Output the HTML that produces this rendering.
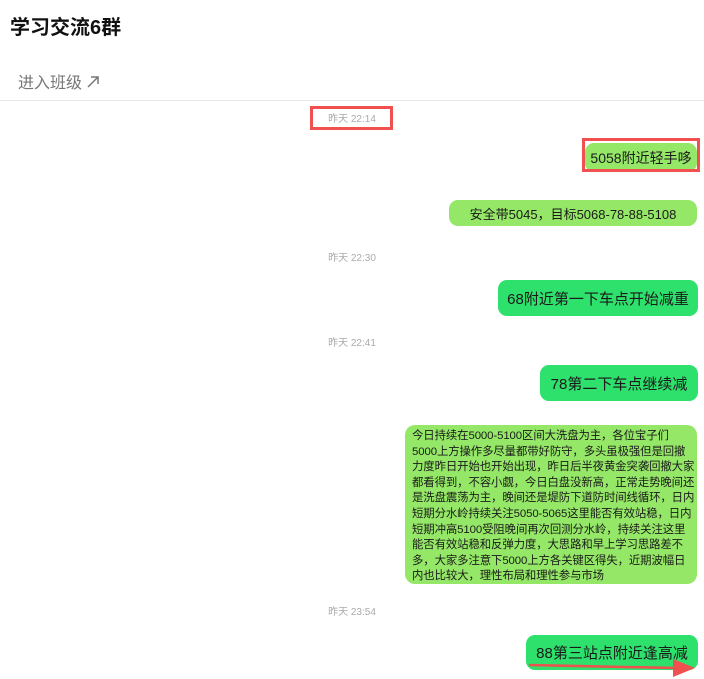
<!DOCTYPE html>
<html><head><meta charset="utf-8"><style>
body{margin:0;width:704px;height:679px;background:#fff;position:relative;overflow:hidden;font-family:"Liberation Sans","Noto Sans CJK SC",sans-serif;color:#222}
.a{position:absolute;white-space:nowrap}
.ts{font-size:10px;color:#aaa;width:100%;text-align:center;left:0}
.b{position:absolute;box-sizing:border-box;border-radius:9px;color:#1a1a1a;display:flex;align-items:center;justify-content:center;white-space:nowrap}
.l{background:#95e867}
.g{background:#2ee06c;font-size:15px}
</style></head><body>
<div class="a" style="left:10px;top:11px;font-size:20px;font-weight:bold;color:#111">学习交流6群</div>
<div class="a" style="left:18px;top:69px;font-size:16px;color:#777">进入班级 <svg width="14" height="14" viewBox="0 0 14 14" style="vertical-align:-1px"><path d="M2 12L12 2M5 2h7v7" fill="none" stroke="#777" stroke-width="1.5"/></svg></div>
<div class="a" style="left:0;top:100px;width:704px;height:1px;background:#e6e6e6"></div>

<div class="a ts" style="top:110px">昨天 22:14</div>
<div class="a" style="left:310px;top:106px;width:77px;height:18px;border:3px solid #f05050"></div>

<div class="b l" style="left:585px;top:143px;width:112px;height:29px;font-size:14px">5058附近轻手哆</div>
<div class="a" style="left:582px;top:138px;width:112px;height:28px;border:3px solid #f05050"></div>

<div class="b l" style="left:449px;top:200px;width:248px;height:26px;font-size:13px">安全带5045，目标5068-78-88-5108</div>

<div class="a ts" style="top:249px">昨天 22:30</div>
<div class="b g" style="left:498px;top:280px;width:200px;height:36px">68附近第一下车点开始减重</div>

<div class="a ts" style="top:334px">昨天 22:41</div>
<div class="b g" style="left:540px;top:365px;width:158px;height:36px">78第二下车点继续减</div>

<div class="b l" style="left:405px;top:425px;width:292px;height:159px;font-size:11.4px;line-height:15.6px;display:block;padding:4px 0 0 7px;border-radius:10px;letter-spacing:-0.1px">今日持续在5000-5100区间大洗盘为主，各位宝子们<br>5000上方操作多尽量都带好防守，多头虽极强但是回撤<br>力度昨日开始也开始出现，昨日后半夜黄金突袭回撤大家<br>都看得到，不容小觑，今日白盘没新高，正常走势晚间还<br>是洗盘震荡为主，晚间还是堤防下道防时间线循环，日内<br>短期分水岭持续关注5050-5065这里能否有效站稳，日内<br>短期冲高5100受阻晚间再次回测分水岭，持续关注这里<br>能否有效站稳和反弹力度，大思路和早上学习思路差不<br>多，大家多注意下5000上方各关键区得失，近期波幅日<br>内也比较大，理性布局和理性参与市场</div>

<div class="a ts" style="top:603px">昨天 23:54</div>
<div class="b g" style="left:526px;top:635px;width:172px;height:35px">88第三站点附近逢高减</div>
<svg class="a" style="left:525px;top:655px" width="179" height="24" viewBox="0 0 179 24"><path d="M4 10L150 13" stroke="#f05050" stroke-width="2.5"/><path d="M148 4L170 13L148 22Z" fill="#f05050"/></svg>
</body></html>
